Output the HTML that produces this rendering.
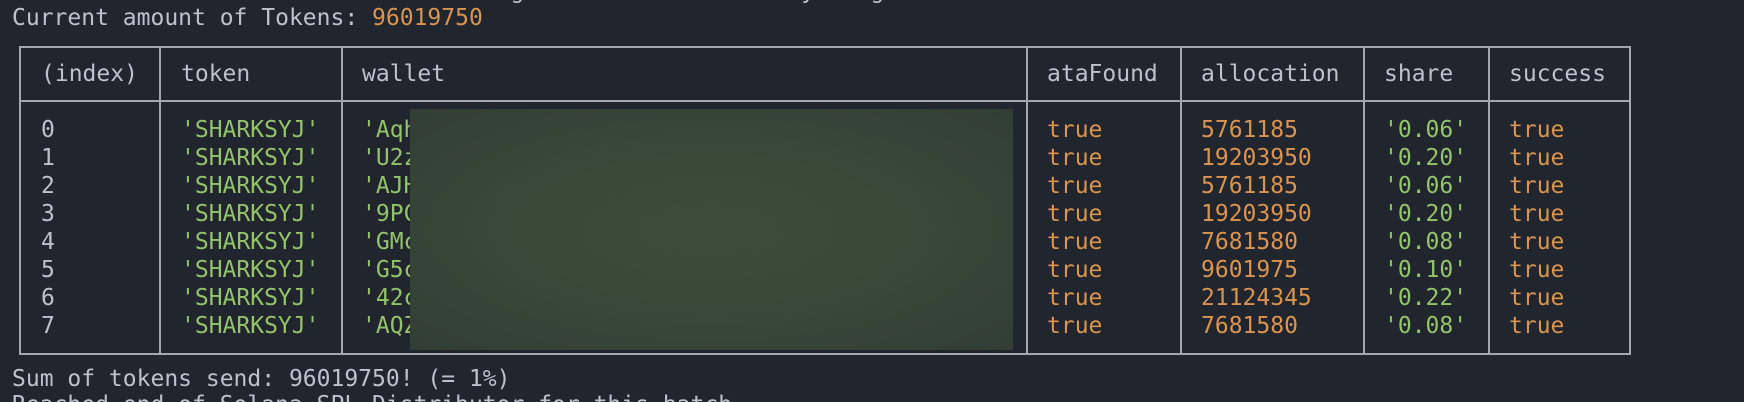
<!DOCTYPE html>
<html><head><meta charset="utf-8"><style>
html{margin:0;padding:0;width:1744px;height:402px;overflow:hidden;}
body{margin:0;padding:0;width:1744px;height:402px;background:#21252e;overflow:hidden;position:relative;font-family:"DejaVu Sans Mono","Liberation Mono",monospace;font-size:23px;color:#bcc2cd;}
.t{position:absolute;white-space:pre;line-height:28px;}
.g{color:#93c36b;}
.o{color:#d99450;}
.h{position:absolute;background:#a3a7b0;}
</style></head><body>
<div class="t" style="left:12px;top:-23px;">Current amount of tokens is not enough to distribute everything</div>
<div class="t" style="left:12px;top:4px;">Current amount of Tokens: <span class="o">96019750</span></div>

<div class="h" style="left:19px;top:46px;width:1612px;height:2px;"></div>
<div class="h" style="left:19px;top:100px;width:1612px;height:2px;"></div>
<div class="h" style="left:19px;top:353px;width:1612px;height:2px;"></div>
<div class="h" style="left:19px;top:46px;width:2px;height:309px;"></div>
<div class="h" style="left:159px;top:46px;width:2px;height:309px;"></div>
<div class="h" style="left:341px;top:46px;width:2px;height:309px;"></div>
<div class="h" style="left:1026px;top:46px;width:2px;height:309px;"></div>
<div class="h" style="left:1180px;top:46px;width:2px;height:309px;"></div>
<div class="h" style="left:1363px;top:46px;width:2px;height:309px;"></div>
<div class="h" style="left:1488px;top:46px;width:2px;height:309px;"></div>
<div class="h" style="left:1629px;top:46px;width:2px;height:309px;"></div>

<div class="t" style="left:41px;top:60px;">(index)</div>
<div class="t" style="left:181px;top:60px;">token</div>
<div class="t" style="left:362px;top:60px;">wallet</div>
<div class="t" style="left:1047px;top:60px;">ataFound</div>
<div class="t" style="left:1201px;top:60px;">allocation</div>
<div class="t" style="left:1384px;top:60px;">share</div>
<div class="t" style="left:1509px;top:60px;">success</div>

<div class="t" style="left:41px;top:116px;">0
1
2
3
4
5
6
7</div>
<div class="t g" style="left:181px;top:116px;">'SHARKSYJ'
'SHARKSYJ'
'SHARKSYJ'
'SHARKSYJ'
'SHARKSYJ'
'SHARKSYJ'
'SHARKSYJ'
'SHARKSYJ'</div>
<div class="t g" style="left:362px;top:116px;">'Aqh
'U2z
'AJH
'9PC
'GMc
'G5c
'42c
'AQZ</div>
<div class="t o" style="left:1047px;top:116px;">true
true
true
true
true
true
true
true</div>
<div class="t o" style="left:1201px;top:116px;">5761185
19203950
5761185
19203950
7681580
9601975
21124345
7681580</div>
<div class="t g" style="left:1384px;top:116px;">'0.06'
'0.20'
'0.06'
'0.20'
'0.08'
'0.10'
'0.22'
'0.08'</div>
<div class="t o" style="left:1509px;top:116px;">true
true
true
true
true
true
true
true</div>

<div style="position:absolute;left:410px;top:109px;width:603px;height:241px;background:radial-gradient(ellipse at 50% 50%,#3d4d3a 0%,#394838 50%,#323e35 100%);"></div>

<div class="t" style="left:12px;top:365px;">Sum of tokens send: 96019750! (= 1%)</div>
<div class="t" style="left:12px;top:391px;">Reached end of Solana SPL Distributor for this batch</div>
</body></html>
